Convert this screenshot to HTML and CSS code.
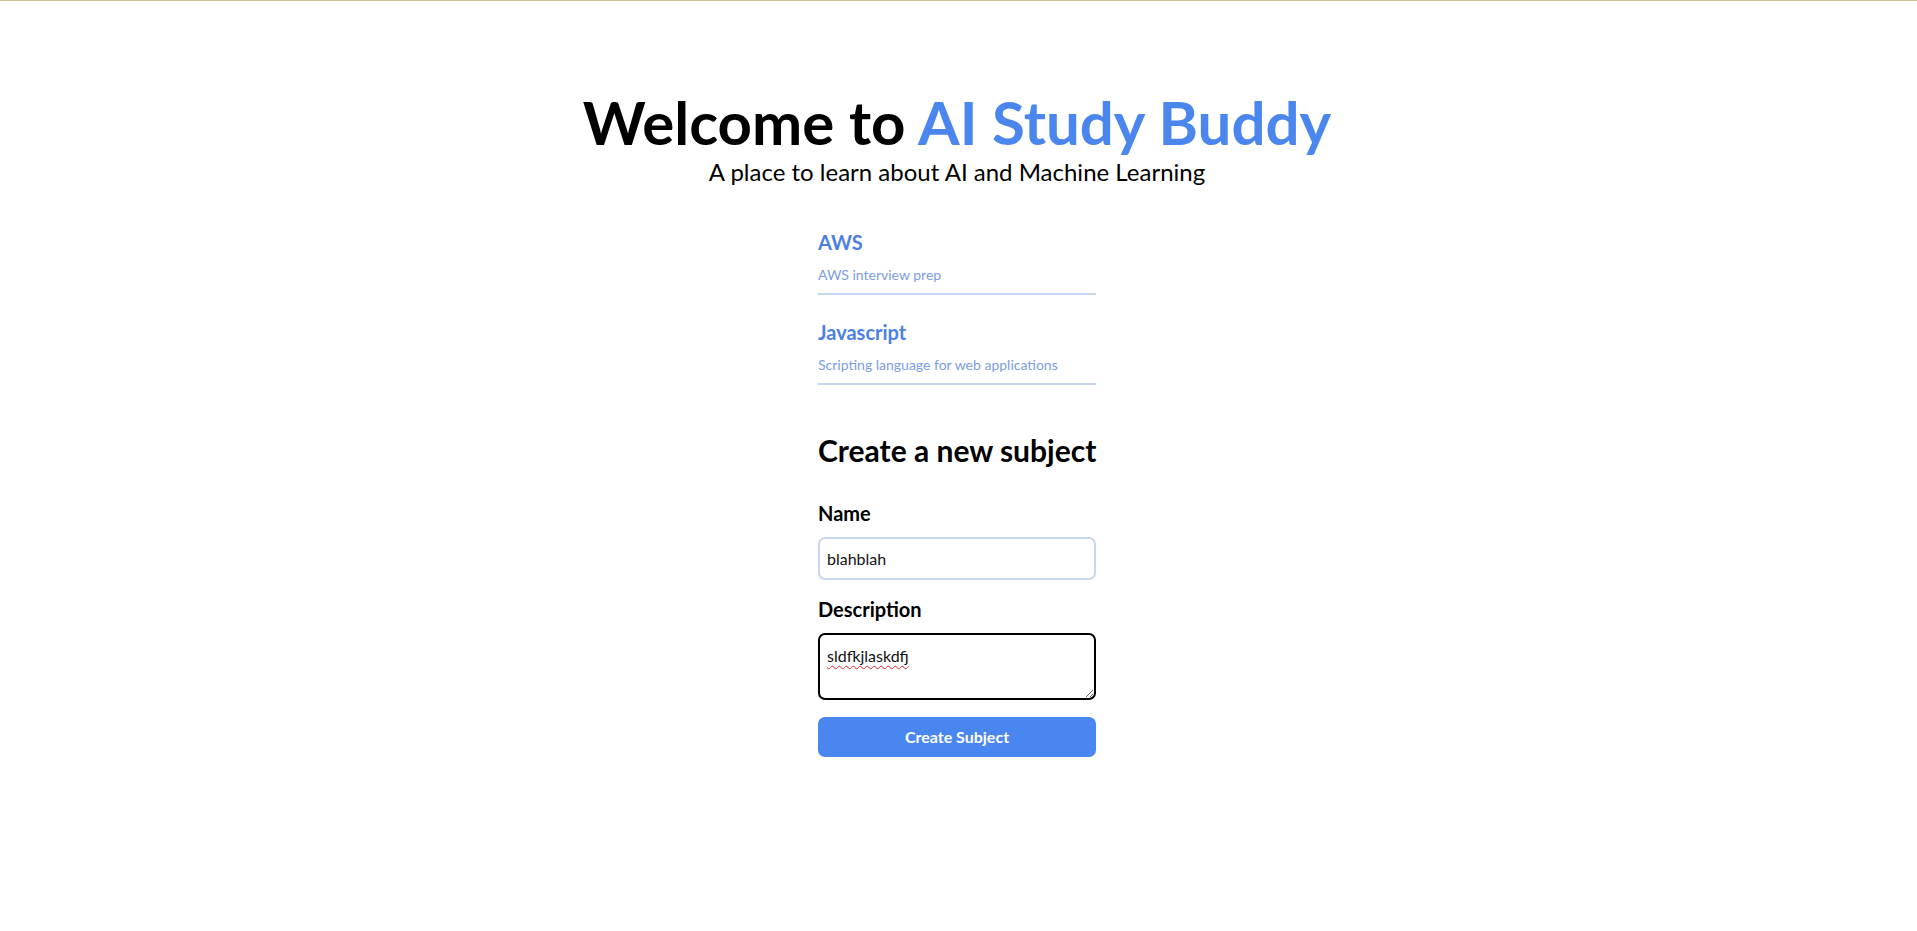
FILE: index.html
```html
<!DOCTYPE html>
<html lang="en">
<head>
<meta charset="utf-8">
<title>AI Study Buddy</title>
<link rel="stylesheet" href="styles.css">
</head>
<body>
<main class="page">
  <header class="hero">
    <h1 class="hero-title">Welcome to <span class="accent">AI Study Buddy</span></h1>
    <p class="hero-sub">A place to learn about AI and Machine Learning</p>
  </header>
  <section class="content">
    <ul class="subjects">
      <li class="subject">
        <h2 class="subject-name">AWS</h2>
        <p class="subject-desc">AWS interview prep</p>
      </li>
      <li class="subject">
        <h2 class="subject-name">Javascript</h2>
        <p class="subject-desc">Scripting language for web applications</p>
      </li>
    </ul>
    <form class="create-form">
      <h2 class="form-title">Create a new subject</h2>
      <label class="field-label" for="name">Name</label>
      <input class="field-input" id="name" type="text" value="blahblah">
      <label class="field-label field-label-second" for="desc">Description</label>
      <textarea class="field-textarea" id="desc">sldfkjlaskdfj</textarea>
      <button class="submit-btn" type="button">Create Subject</button>
    </form>
  </section>
</main>
</body>
</html>
```

FILE: styles.css
```css
* { box-sizing: border-box; }
html, body { margin: 0; padding: 0; }
body {
  background: #ffffff;
  border-top: 1px solid #cbbf9d;
  font-family: Lato, "Open Sans", "Liberation Sans", sans-serif;
  color: #000;
  min-height: 931px;
}
.page {
  display: flex;
  flex-direction: column;
  align-items: center;
  padding-right: 3px;
}
.hero {
  text-align: center;
  padding-top: 88px;
}
.hero-title {
  margin: 0;
  font-size: 60px;
  line-height: 66px;
  font-weight: 700;
  color: #000;
}
.accent { color: #4a86ee; }
.hero-sub {
  margin: 3px 0 0;
  font-size: 24px;
  line-height: 28.8px;
  font-weight: 400;
}
.content {
  width: 278px;
  margin-top: 43px;
  display: flex;
  flex-direction: column;
}
.subjects {
  list-style: none;
  margin: 0;
  padding: 0;
  display: flex;
  flex-direction: column;
  gap: 25px;
}
.subject {
  padding-bottom: 10px;
  border-bottom: 2px solid #c6d6f0;
}
.subject-name {
  margin: 0;
  font-size: 20px;
  line-height: 24px;
  font-weight: 700;
  color: #4d7fe4;
}
.subject-desc {
  margin: 12px 0 0;
  font-size: 14px;
  line-height: 17px;
  color: #7b9de4;
}
.create-form {
  margin-top: 47px;
  display: flex;
  flex-direction: column;
}
.form-title {
  margin: 0 0 33px;
  font-size: 30px;
  line-height: 36px;
  font-weight: 700;
  white-space: nowrap;
}
.field-label {
  font-size: 20px;
  line-height: 24px;
  font-weight: 700;
  margin-bottom: 12px;
}
.field-label-second { margin-top: 17px; }
.field-input {
  height: 43px;
  width: 100%;
  border: 2px solid #c9d8f1;
  border-radius: 7px;
  padding: 0 7px;
  font-family: Lato, "Open Sans", "Liberation Sans", sans-serif;
  font-size: 16px;
  color: #111;
  background: #fff;
  outline: none;
}
.field-textarea {
  height: 67px;
  width: 100%;
  border: 2px solid #000;
  border-radius: 7px;
  padding: 11px 7px 0;
  font-family: Lato, "Open Sans", "Liberation Sans", sans-serif;
  font-size: 16px;
  color: #111;
  background: #fff;
  outline: none;
  text-decoration: underline wavy #e0262b;
  text-decoration-thickness: 1px;
  text-underline-offset: 3px;
}
.submit-btn {
  margin-top: 17px;
  height: 40px;
  width: 100%;
  border: none;
  border-radius: 7px;
  background: #4a86f0;
  color: #fff;
  font-family: Lato, "Open Sans", "Liberation Sans", sans-serif;
  font-size: 16px;
  font-weight: 700;
  cursor: pointer;
}
```
